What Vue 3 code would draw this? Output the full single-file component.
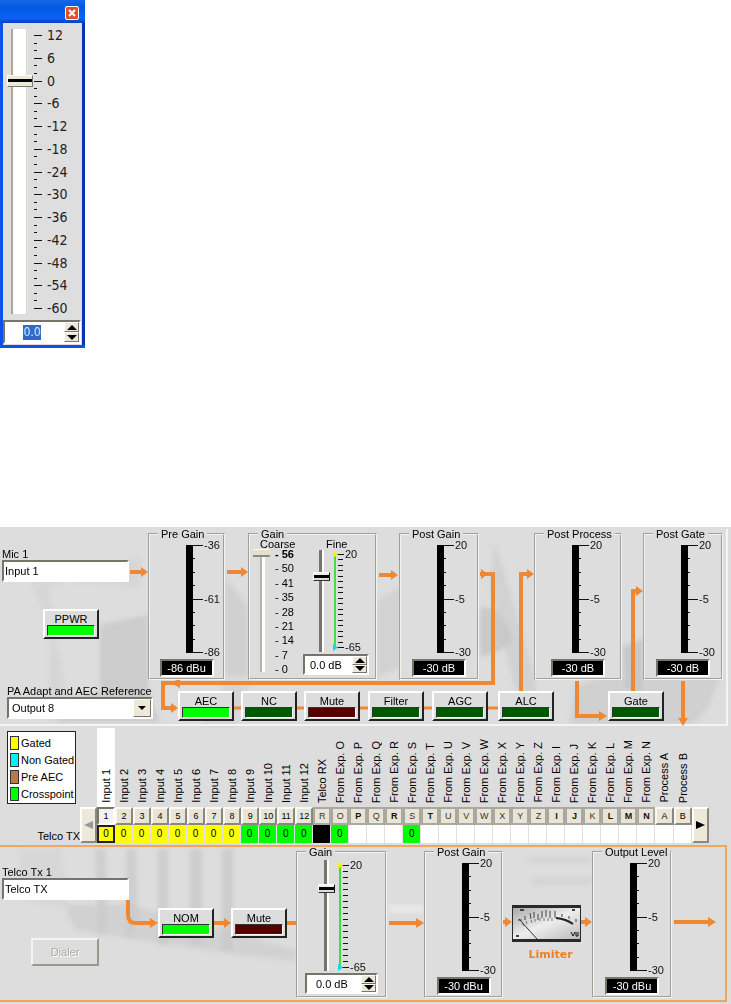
<script setup>
import { h, ref } from 'vue'

const masterLabels = [12, 6, 0, -6, -12, -18, -24, -30, -36, -42, -48, -54, -60]
const master = ref(0)
const coarse = ref(8)
const fine = ref(0)
const outGain = ref(0)
const coarseSteps = [56, 50, 41, 35, 28, 21, 14, 7, 0]

const line = (x1, y1, x2, y2, stroke = '#111') =>
  h('line', { x1, y1, x2, y2, stroke, 'stroke-width': 1, 'shape-rendering': 'crispEdges' })

const MasterScale = () =>
  h('svg', { width: 42, height: 289, viewBox: '0 0 42 289', 'aria-hidden': 'true' }, [
    ...Array.from({ length: 37 }, (_, i) => {
      const y = Math.round(8 + (i * 273) / 36) + 0.5
      return line(0, y, i % 3 === 0 ? 8 : 3, y)
    }),
    ...masterLabels.map((t, i) =>
      h('text', { x: 13, y: Math.round(13 + (i * 273) / 12), fill: '#222' }, String(t))
    ),
  ])

const MeterScale = (props) =>
  h('svg', { width: 38, height: 118, viewBox: '0 0 38 118', overflow: 'visible', 'aria-hidden': 'true' }, [
    h('rect', { x: 0, y: 4, width: 7, height: 108, fill: '#000' }),
    ...Array.from({ length: 9 }, (_, i) => {
      const y = Math.round(4 + (i * 107) / 8) + 0.5
      return line(7, y, i % 4 === 0 ? 17 : 9, y)
    }),
    ...props.labels.map((t, i) =>
      h('text', { x: 18, y: Math.round(8 + (i * 107) / 2), fill: '#111' }, t)
    ),
  ])
MeterScale.props = ['labels']

const FineScale = (props) => {
  const s = props.span
  return h('svg', { width: 34, height: s + 12, viewBox: `0 0 34 ${s + 12}`, overflow: 'visible', 'aria-hidden': 'true' }, [
    h('rect', { x: 1, y: 5, width: 2, height: s, fill: '#3fe03f' }),
    ...Array.from({ length: 18 }, (_, i) => {
      const y = Math.round(5 + (i * s) / 17) + 0.5
      return i % 17 === 0 ? line(3, y, 11, y) : line(5, y, 10, y)
    }),
    h('path', { d: 'M0 2L5 5.5L0 9Z', fill: '#ffef00' }),
    h('path', { d: `M0 ${s + 2}L5 ${s + 5.5}L0 ${s + 9}Z`, fill: '#12d8ee' }),
    h('text', { x: 12, y: 9, fill: '#111' }, '20'),
    h('text', { x: 12, y: s + 9, fill: '#111' }, '-65'),
  ])
}
FineScale.props = ['span']

const meters = [
  { name: 'Pre Gain', cls: 'c-pre', labels: ['-36', '-61', '-86'], value: '-86 dBu' },
  { name: 'Post Gain', cls: 'c-post', labels: ['20', '-5', '-30'], value: '-30 dB' },
  { name: 'Post Process', cls: 'c-process', labels: ['20', '-5', '-30'], value: '-30 dB' },
  { name: 'Post Gate', cls: 'c-gate', labels: ['20', '-5', '-30'], value: '-30 dB' },
]
const outMeters = [
  { name: 'Post Gain', cls: 'o-post', labels: ['20', '-5', '-30'], value: '-30 dBu' },
  { name: 'Output Level', cls: 'o-level', labels: ['20', '-5', '-30'], value: '-30 dBu' },
]
const stages = [
  { name: 'AEC', led: 'on' },
  { name: 'NC', led: 'off' },
  { name: 'Mute', led: 'red' },
  { name: 'Filter', led: 'off' },
  { name: 'AGC', led: 'off' },
  { name: 'ALC', led: 'off' },
  { name: 'Gate', led: 'off' },
]
const legend = [
  { name: 'Gated', cls: 'gated' },
  { name: 'Non Gated', cls: 'open' },
  { name: 'Pre AEC', cls: 'pre' },
  { name: 'Crosspoint', cls: 'cross' },
]
const columns = [
  ...Array.from({ length: 12 }, (_, i) => ({
    name: `Input ${i + 1}`, key: String(i + 1), cell: i < 8 ? 'gated' : 'cross', bus: '',
  })),
  { name: 'Telco RX', key: 'R', cell: 'self', bus: 'bus' },
  ...'OPQRSTUVWXYZIJKLMN'.split('').map((c) => ({
    name: `From Exp. ${c}`, key: c, cell: c === 'O' || c === 'S' ? 'cross' : '',
    bus: 'PRTIJLMN'.includes(c) ? 'bus strong' : 'bus',
  })),
  { name: 'Process A', key: 'A', cell: '', bus: '' },
  { name: 'Process B', key: 'B', cell: '', bus: '' },
]
</script>

<template>
  <main class="page">
    <section class="fader" aria-label="Fader">
      <header class="titlebar">
        <button class="close" aria-label="Close">
          <svg width="8" height="8" viewBox="0 0 8 8"><path d="M1 1L7 7M7 1L1 7" stroke="#fff" stroke-width="2" /></svg>
        </button>
      </header>
      <div class="fader-body">
        <input v-model="master" class="range master" type="range" min="-60" max="12" aria-label="Level" />
        <MasterScale class="master-scale" />
      </div>
      <div class="spin master-spin">
        <input class="picked" value="0.0" aria-label="Level in dB" />
        <span class="steps">
          <button aria-label="Increase"><svg width="10" height="5" viewBox="0 0 10 5"><path d="M0 5L5 0L10 5Z" /></svg></button>
          <button aria-label="Decrease"><svg width="10" height="5" viewBox="0 0 10 5"><path d="M0 0L5 5L10 0Z" /></svg></button>
        </span>
      </div>
    </section>

    <section class="panel channel" aria-label="Mic channel">
      <svg class="wires" viewBox="0 0 731 201" preserveAspectRatio="none" aria-hidden="true">
        <defs>
          <filter id="soft"><feGaussianBlur stdDeviation="2" /></filter>
        </defs>
        <g filter="url(#soft)" fill="#c8c8c8">
          <path d="M30 50L50 100L50 195L70 195L48 60L140 30V60Z" opacity=".35" />
          <path d="M100 98L148 88V165L160 195H60L50 175L100 165Z" opacity=".8" />
          <path d="M225 50L248 80V150H225Z" opacity=".6" />
          <path d="M225 155H250L235 200H200Z" opacity=".4" />
          <path d="M377 75L400 60V140L377 150Z" opacity=".5" />
          <path d="M480 80Q505 80 513 115Q500 125 480 130Z" opacity=".9" />
          <path d="M495 15L520 100L535 150L540 195L515 160L490 60Z" opacity=".5" />
          <path d="M622 120L643 112V170L625 160Z" />
          <path d="M575 160L600 150H720Q705 195 690 197H570Z" opacity=".6" />
        </g>
        <path d="M0 198H727V2" fill="none" stroke="#f4f4f4" stroke-width="2" />
        <g fill="none" stroke="#f08833" stroke-width="4">
          <path d="M130 45H143M227 45H243M379 48H393M480 47H493V156H163V181H173" />
          <path d="M521 165V47H529M577 154V189H601M633 165V64H638M683 154V194" />
          <path d="M234 181H498" stroke-width="3" />
        </g>
        <g fill="#f08833">
          <path d="M141 40L148 45L141 50ZM241 40L248 45L241 50ZM391 43L398 48L391 53ZM481 42L488 47L481 52ZM527 42L534 47L527 52ZM636 59L643 64L636 69Z" />
          <path d="M180 151L171 156L180 161ZM171 176L178 181L171 186ZM599 184L607 189L599 194ZM678 191H688L683 199Z" />
        </g>
      </svg>

      <div class="groups">
        <div class="side">
          <label for="mic">Mic 1</label>
          <input id="mic" class="field" value="Input 1" />
          <button class="led-btn ppwr">PPWR<span class="led on"></span></button>
        </div>
        <fieldset v-for="m in meters" :key="m.name" class="group" :class="m.cls">
          <legend>{{ m.name }}</legend>
          <MeterScale class="meter" :labels="m.labels" />
          <output class="readout">{{ m.value }}</output>
        </fieldset>
        <fieldset class="group c-gain">
          <legend>Gain</legend>
          <div class="gain">
            <div class="coarse">
              <span class="head">Coarse</span>
              <div class="pair">
                <input v-model="coarse" class="range coarse-range" type="range" min="0" max="8" aria-label="Coarse gain" />
                <ul>
                  <li v-for="s in coarseSteps" :key="s" :class="{ chosen: s === 56 }">- {{ s }}</li>
                </ul>
              </div>
            </div>
            <div class="fine">
              <span class="head fine-head">Fine</span>
              <div class="pair fine-pair">
                <input v-model="fine" class="range thin" type="range" min="-65" max="20" aria-label="Fine gain" />
                <FineScale :span="93" />
              </div>
              <div class="spin">
                <input value="0.0 dB" aria-label="Fine gain value" />
                <span class="steps">
                  <button aria-label="Increase"><svg width="10" height="5" viewBox="0 0 10 5"><path d="M0 5L5 0L10 5Z" /></svg></button>
                  <button aria-label="Decrease"><svg width="10" height="5" viewBox="0 0 10 5"><path d="M0 0L5 5L10 0Z" /></svg></button>
                </span>
              </div>
            </div>
          </div>
        </fieldset>
      </div>

      <div class="stages">
        <div class="reference">
          <label for="aec">PA Adapt and AEC Reference</label>
          <div class="combo">
            <select id="aec"><option>Output 8</option></select>
            <span class="drop"><svg width="8" height="4" viewBox="0 0 8 4"><path d="M0 0H8L4 4Z" /></svg></span>
          </div>
        </div>
        <button v-for="(s, i) in stages" :key="s.name" class="led-btn" :class="'s' + i">{{ s.name }}<span class="led" :class="s.led"></span></button>
      </div>
    </section>

    <section class="matrix" aria-label="Matrix">
      <div class="matrix-side">
        <ul class="key">
          <li v-for="l in legend" :key="l.name"><i :class="l.cls"></i>{{ l.name }}</li>
        </ul>
        <span class="row-name">Telco TX</span>
      </div>
      <button class="scroll dim" aria-label="Scroll left"><svg width="9" height="8" viewBox="0 0 9 8"><path d="M9 0V8L0 4Z" /></svg></button>
      <table>
        <thead>
          <tr class="names">
            <th v-for="(c, i) in columns" :key="c.name" scope="col" :class="{ active: i === 0 }"><span>{{ c.name }}</span></th>
          </tr>
        </thead>
        <tbody>
          <tr class="keys">
            <td v-for="(c, i) in columns" :key="c.name"><button :class="[c.bus, { down: i === 0 }]">{{ c.key }}</button></td>
          </tr>
          <tr class="cells">
            <td v-for="(c, i) in columns" :key="c.name" :class="[c.cell, { cursor: i === 0 }]">{{ c.cell && c.cell !== 'self' ? '0' : '' }}</td>
          </tr>
        </tbody>
      </table>
      <button class="scroll" aria-label="Scroll right"><svg width="9" height="8" viewBox="0 0 9 8"><path d="M0 0V8L9 4Z" /></svg></button>
    </section>

    <section class="panel output" aria-label="Telco output">
      <svg class="wires" viewBox="0 0 731 159" preserveAspectRatio="none" aria-hidden="true">
        <g filter="url(#soft)" fill="#c9c9c9">
          <path d="M20 4H60L72 84L65 62L20 55Z" opacity=".3" />
          <path d="M95 4H106V90H98Z" opacity=".7" />
          <path d="M126 4H136L138 75L130 95L126 90Z" opacity=".7" />
          <path d="M158 4H168V100H158ZM190 4H202V102L190 100ZM222 4H233V106H222Z" opacity=".8" />
          <path d="M65 60H130L296 105V116L240 110L75 85Z" opacity=".6" />
          <path d="M388 60H424V68H388Z" fill="#e8e8e8" />
          <path d="M528 12H590V18H528ZM532 33H592V40H532Z" opacity=".4" />
        </g>
        <path d="M0 1H726V156H0" fill="none" stroke="#f3a55a" stroke-width="2" />
        <g fill="none" stroke="#f08833" stroke-width="4">
          <path d="M128 55V70Q128 78 136 78H152M214 78H226M287 78H296M389 78H418M503 77H508M581 77H587M674 77H710" />
        </g>
        <g fill="#f08833">
          <path d="M150 73L158 78L150 83ZM224 73L231 78L224 83ZM416 73L424 78L416 83ZM505 72L512 77L505 82ZM585 72L592 77L585 82ZM708 72L716 77L708 82Z" />
        </g>
      </svg>
      <div class="out-grid">
        <div class="side out-side">
          <label for="telco">Telco Tx 1</label>
          <input id="telco" class="field" value="Telco TX" />
          <button class="dialer" disabled>Dialer</button>
        </div>
        <button class="led-btn o-nom">NOM<span class="led on"></span></button>
        <button class="led-btn o-mute">Mute<span class="led red"></span></button>
        <fieldset class="group o-gain">
          <legend>Gain</legend>
          <div class="pair out-pair">
            <input v-model="outGain" class="range thin long" type="range" min="-65" max="20" aria-label="Output gain" />
            <FineScale :span="102" />
          </div>
          <div class="spin out-spin">
            <input value="0.0 dB" aria-label="Output gain value" />
            <span class="steps">
              <button aria-label="Increase"><svg width="10" height="5" viewBox="0 0 10 5"><path d="M0 5L5 0L10 5Z" /></svg></button>
              <button aria-label="Decrease"><svg width="10" height="5" viewBox="0 0 10 5"><path d="M0 0L5 5L10 0Z" /></svg></button>
            </span>
          </div>
        </fieldset>
        <fieldset v-for="m in outMeters" :key="m.name" class="group" :class="m.cls">
          <legend>{{ m.name }}</legend>
          <MeterScale class="meter" :labels="m.labels" />
          <output class="readout">{{ m.value }}</output>
        </fieldset>
        <figure class="limiter">
          <svg viewBox="0 0 69 37" height="37" preserveAspectRatio="none" aria-hidden="true">
            <defs>
              <linearGradient id="glass" x1="0" y1="0" x2="1" y2="1">
                <stop offset="0" stop-color="#aaa" /><stop offset=".5" stop-color="#eee" /><stop offset="1" stop-color="#bbb" />
              </linearGradient>
            </defs>
            <rect width="69" height="37" fill="#2a2a2a" />
            <rect x="1" y="3" width="67" height="31" fill="url(#glass)" />
            <g fill="none" stroke="#444">
              <path d="M6 15H10M13 11V15M18 8L19 14M22 7V13M26 9V15M30 6V13M34 5V12M38 6V13M43 6V13M50 9V12M57 11V14M64 14V17" />
              <path d="M10 18L12 21M14 16L15 19M19 15L20 18M23 14V17M28 16V13M32 16V13M36 16V13M40 16V13" stroke="#777" />
              <path d="M44 13Q54 14 61 19" stroke="#222" stroke-width="2" />
              <path d="M7 14L25 34" stroke="#333" />
              <path d="M8 5H12M60 5H63M4 31H7" stroke-width="2" />
              <path d="M59 27L61 31L63 27M64 27V31H66V27" stroke="#111" />
            </g>
          </svg>
          <figcaption>Limiter</figcaption>
        </figure>
      </div>
    </section>
  </main>
</template>

<style>
body { margin: 0; background: #fff; }
</style>

<style scoped>
.page { font: 11px/12px "Liberation Sans", Arial, sans-serif; color: #000; }
.page * { box-sizing: border-box; }
input, button, select { font: inherit; color: inherit; margin: 0; border-radius: 0; min-width: 0; }
svg { display: block; }
button { padding: 0; cursor: default; }
ul { list-style: none; margin: 0; padding: 0; }

/* fader window */
.fader { width: 85px; margin-bottom: 179px; padding: 0 4px 4px 3px; background: #dedede; box-shadow: inset 3px -3px #0a52e8, inset -3px -3px #0634b8; }
.titlebar { display: flex; justify-content: flex-end; align-items: center; height: 23px; margin: 0 -4px 0 -3px; padding: 3px 6px 0 0; background: linear-gradient(#1668e8, #0458e4 30%, #0a62f4 80%, #0340c0); }
.close { display: grid; place-items: center; width: 14px; height: 14px; border: 1px solid #fff; border-radius: 2px; background: #e0502c; }
.fader-body { display: flex; height: 297px; padding: 6px 0 0 4px; }
.master-scale { font: 14px "DejaVu Sans Condensed", "DejaVu Sans", sans-serif; margin-left: 1px; margin-top: -2px; }

/* vertical sliders */
.range { appearance: none; writing-mode: vertical-lr; direction: rtl; background: transparent; outline: 0; }
.range::-webkit-slider-thumb { appearance: none; }
.master { width: 26px; height: 285px; background: linear-gradient(90deg, transparent 4px, #aaa898 4px, #aaa898 6px, #fff 6px, #fff 19px, #c8c6b8 19px, #f4f4f4 21px, transparent 21px); }
.master::-webkit-slider-thumb { width: 26px; height: 12px; border: 1px solid; border-color: #fff #777 #777 #fff; background: linear-gradient(#ece9d8 3px, #000 3px, #000 6px, #ece9d8 6px); }
.coarse-range { width: 20px; height: 123px; background: linear-gradient(90deg, transparent 7px, #b8b6a6 7px, #b8b6a6 9px, #fff 9px, #fff 12px, transparent 12px); }
.coarse-range::-webkit-slider-thumb { width: 20px; height: 8px; background: linear-gradient(#fff 1px, #e4e0cc 1px, #e4e0cc 6px, #8a887c 6px); clip-path: polygon(0 0, 80% 0, 100% 40%, 80% 100%, 0 100%); }
.thin { width: 17px; height: 102px; background: linear-gradient(90deg, transparent 6px, #77756a 6px, #77756a 9px, #fff 9px, #fff 11px, transparent 11px); }
.thin.long { height: 111px; }
.thin::-webkit-slider-thumb { width: 17px; height: 9px; border: 1px solid; border-color: #fff #111 #333 #fff; background: linear-gradient(#eee 2px, #000 2px, #000 5px, #ddd 5px); }

/* spin boxes */
.spin { display: flex; align-items: center; height: 21px; background: #fff; border: 2px solid; border-color: #77756a #fff #fff #77756a; }
.spin input { flex: 1; width: 0; height: 16px; border: 0; padding: 0 0 0 5px; background: transparent; outline: 0; }
.steps { display: flex; flex-direction: column; flex: none; width: 15px; height: 100%; }
.steps button { flex: 1; display: grid; place-items: center; min-height: 0; border: 1px solid; border-color: #fff #77756a #77756a #fff; background: #ece9d8; }
.spin.master-spin { width: 78px; height: 24px; padding-left: 18px; }
.spin input.picked { flex: none; width: 18px; height: 15px; padding: 0; background: #316ac5; color: #dfe8ff; font: 12px/15px "DejaVu Sans Condensed", "DejaVu Sans", sans-serif; text-align: center; }
.master-spin .steps { margin-left: auto; }

/* panels */
.panel { position: relative; background: #ddd; }
.wires { position: absolute; inset: 0; width: 100%; height: 100%; }
.groups, .stages, .out-grid { position: relative; display: grid; align-items: start; }
.groups { grid-template-columns: 148fr 77fr 23fr 129fr 22fr 80fr 55fr 88fr 21fr 80fr 8fr; height: 156px; }
.groups > *, .stages > *, .out-grid > * { min-width: 0; grid-row: 1; }
.c-pre { grid-column: 2; }
.c-gain { grid-column: 4; }
.c-post { grid-column: 6; }
.c-process { grid-column: 8; }
.c-gate { grid-column: 10; }

.side { display: flex; flex-direction: column; align-items: flex-start; grid-column: 1; padding: 21px 19px 0 2px; }
.field { width: 100%; height: 22px; padding: 0 1px; border: 2px solid; border-color: #77756a #fff #fff #77756a; background: #fff; outline: 0; }
.group { height: 153px; margin: 0; padding: 0; border: 2px groove #f4f4ee; background: #ddd; }
.group legend { margin-left: 8px; padding: 0 3px; line-height: 14px; white-space: nowrap; }
.meter { margin-left: 36px; }
.readout { display: block; width: 54px; height: 18px; margin: 0 auto; border: 2px solid; border-color: #77756a #fff #fff #77756a; background: #000; color: #fff; line-height: 14px; text-align: center; }

.led-btn { display: flex; flex-direction: column; align-items: center; width: 100%; height: 30px; padding: 2px 2px 0; border: 2px solid; border-color: #fff #222 #222 #fff; background: #ddd; line-height: 12px; }
.led { width: 48px; max-width: 100%; height: 11px; border: 1px solid; border-color: #333 #fff #fff #333; }
.led.on { background: #00ff00; }
.led.off { background: #005800; }
.led.red { background: #580000; }
.ppwr { width: 56px; margin: 27px 0 0 41px; }

.gain { display: flex; justify-content: space-between; padding: 0 6px 0 3px; }
.coarse, .fine { display: flex; flex-direction: column; }
.head { line-height: 6px; padding-left: 7px; }
.fine-head { padding-left: 23px; }
.pair { display: flex; }
.coarse-range { margin-top: 2px; }
.coarse ul { display: flex; flex-direction: column; justify-content: space-between; height: 129px; }
.coarse li { line-height: 14px; white-space: nowrap; padding-left: 2px; }
.chosen { font-weight: bold; }
.fine { width: 66px; }
.fine-pair { gap: 3px; padding: 2px 0 0 10px; height: 107px; }
.fine-pair .range { margin-top: 1px; }

.stages { grid-template-columns: 178fr 56fr 7fr 56fr 7fr 56fr 8fr 56fr 8fr 56fr 10fr 56fr 54fr 56fr 67fr; height: 45px; }
.stages .led-btn { margin-top: 8px; }
.reference { padding: 2px 25px 0 7px; }
.reference label { display: block; white-space: nowrap; }
.combo { position: relative; }
.combo select { appearance: none; display: block; width: 100%; height: 22px; padding: 0 3px; border: 2px solid; border-color: #77756a #fff #fff #77756a; background: #fff; }
.drop { position: absolute; right: 2px; top: 2px; bottom: 2px; width: 18px; display: grid; place-items: center; background: #ece9d8; border: 1px solid; border-color: #fff #77756a #77756a #fff; pointer-events: none; }
.s0 { grid-column: 2; }
.s1 { grid-column: 4; }
.s2 { grid-column: 6; }
.s3 { grid-column: 8; }
.s4 { grid-column: 10; }
.s5 { grid-column: 12; }
.s6 { grid-column: 14; }

/* matrix */
.matrix { display: flex; align-items: flex-end; height: 117px; padding: 0 22px 2px 0; background: #ddd; }
.matrix-side { display: flex; flex-direction: column; justify-content: space-between; flex: none; width: 80px; height: 112px; padding-left: 7px; }
.key { width: 69px; padding: 2px 2px 0; height: 73px; border: 1px solid #222; background: #fff; }
.key li { display: flex; align-items: center; gap: 2px; height: 17px; white-space: nowrap; }
.key i { flex: none; width: 9px; height: 14px; border: 1px solid #333; }
.row-name { align-self: flex-end; line-height: 14px; }
.gated { background: #ffff00; }
.open { background: #00f0ff; }
.pre { background: #c07840; }
.cross { background: #00ff00; }
.self { background: #000; }
.scroll { display: grid; place-items: center; flex: none; width: 17px; height: 36px; background: #ece9d8; border: 2px solid; border-color: #fff #8a887c #8a887c #fff; }
.dim svg { fill: #999; }
table { flex: 1; width: 0; height: 115px; table-layout: fixed; border-collapse: separate; border-spacing: 0; }
th, td { padding: 0; }
.names th { height: 79px; vertical-align: bottom; font-weight: normal; }
.names .active { background: #fff; }
.names span { display: block; writing-mode: vertical-rl; transform: rotate(180deg); white-space: nowrap; line-height: 18px; padding-top: 4px; }
.keys td { height: 18px; }
.keys button { display: block; width: 100%; height: 18px; border: 2px solid; border-color: #f8f8f4 #8a887c #8a887c #f8f8f4; background: #e8e5d6; font-size: 9px; line-height: 12px; text-align: center; }
.keys .bus { border: 2px solid #aaa9a0; color: #333; }
.keys .strong { font-weight: bold; color: #111; }
.keys .down { border-color: #77756a #fff #fff #77756a; background: #f4f2ec; }
.cells td { height: 18px; font-size: 10px; line-height: 12px; text-align: center; border-right: 1px solid #e0e0e0; }
.cells td:not([class]), .cells td[class=""] { background: #fff; }
.cells .cursor { border: 2px solid #222; }

/* output panel */
.output { height: 159px; }
.out-grid { grid-template-columns: 158fr 56fr 17fr 56fr 9fr 91fr 37fr 79fr 9fr 69fr 11fr 80fr 59fr; }
.out-side { padding: 21px 29px 0 2px; }
.dialer { width: 68px; height: 28px; margin: 38px 0 0 29px; border: 2px solid; border-color: #f4f4f0 #999890 #999890 #f4f4f0; background: #ddd; color: #aaa99c; text-shadow: 1px 1px #fff; }
.o-nom { grid-column: 2; }
.o-mute { grid-column: 4; }
.out-grid .led-btn { margin-top: 63px; }
.o-gain { grid-column: 6; }
.o-post { grid-column: 8; }
.o-level { grid-column: 12; }
.out-pair { gap: 3px; padding: 1px 0 0 20px; height: 114px; }
.out-spin { width: 73px; margin: 0 auto; }
.out-spin input { padding-left: 9px; }
.limiter { grid-column: 10; margin: 60px 0 0; }
.limiter svg { width: 100%; }
.limiter figcaption { margin-top: 6px; padding-left: 8px; text-align: center; font: bold 11px/14px "DejaVu Sans", sans-serif; color: #f08022; }
</style>
